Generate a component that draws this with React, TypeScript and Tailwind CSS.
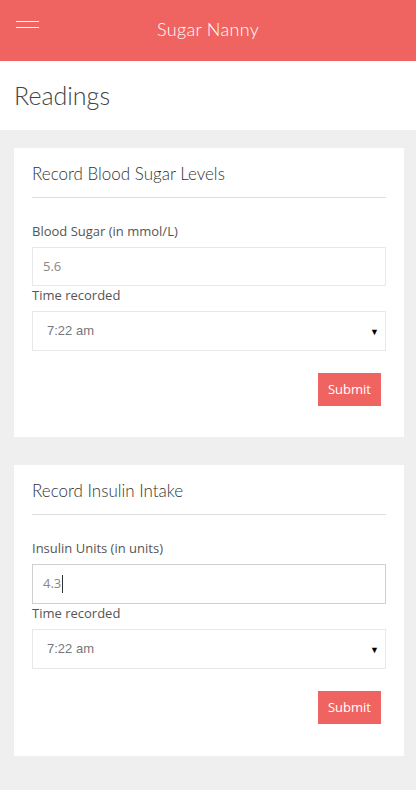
import React from "react";

function Field({ label, value, focused }: { label: string; value: string; focused?: boolean }) {
  return (
    <div>
      <p className="text-[13px] leading-[18px] text-[#555] mb-[7px]">{label}</p>
      <div
        className={`border flex items-center px-[10px] text-[13px] text-[#888] ${
          focused ? "h-[40px] border-[#cfcfcf]" : "h-[39px] border-[#e8e8e8]"
        }`}
      >
        <span>{value}</span>
        {focused && <span className="inline-block w-px h-[18px] bg-[#333] ml-px" />}
      </div>
    </div>
  );
}

function TimeSelect() {
  return (
    <div>
      <p className="text-[13px] leading-[18px] text-[#555] mb-[7px]">Time recorded</p>
      <div className="h-[40px] border border-[#e8e8e8] flex items-center justify-between pl-[14px] pr-[6px]">
        <span className="text-[13px] text-[#777] font-['Liberation_Sans',sans-serif]">7:22 am</span>
        <span className="text-[9px] text-black leading-none">▼</span>
      </div>
    </div>
  );
}

function Card({ title, label, value, focused }: { title: string; label: string; value: string; focused?: boolean }) {
  return (
    <section className={`bg-white px-[18px] pt-[14px] ${focused ? "pb-[32px]" : "pb-[31px]"}`}>
      <h2 className="text-[17px] leading-[24px] font-light font-['Lato',sans-serif] text-[#333] pb-[11px] border-b border-[#ddd]">
        {title}
      </h2>
      <div className="mt-[24px]">
        <Field label={label} value={value} focused={focused} />
        <TimeSelect />
      </div>
      <div className="flex justify-end mt-[22px] pr-[5px]">
        <button className="h-[33px] w-[63px] bg-[#ef6461] text-white text-[13px]">Submit</button>
      </div>
    </section>
  );
}

export default function App() {
  return (
    <div className="min-h-[790px] bg-[#efefef] font-['Open_Sans',sans-serif]">
      <header className="h-[61px] bg-[#ef6461] relative flex items-center justify-center">
        <button className="absolute left-[16px] top-[21px] flex flex-col gap-[5px]">
          <span className="block w-[23px] h-px bg-white" />
          <span className="block w-[23px] h-px bg-white" />
        </button>
        <h1 className="text-white text-[18px] font-light font-['Lato',sans-serif] tracking-[0.3px] mt-[-3px]">Sugar Nanny</h1>
      </header>

      <div className="bg-white h-[69px] flex items-center px-[14px]">
        <h1 className="text-[25px] font-light font-['Lato',sans-serif] text-[#444] mt-[1px]">Readings</h1>
      </div>

      <main className="pl-[14px] pr-[12px] pt-[18px] flex flex-col gap-[28px] pb-[34px]">
        <Card title="Record Blood Sugar Levels" label="Blood Sugar (in mmol/L)" value="5.6" />
        <Card title="Record Insulin Intake" label="Insulin Units (in units)" value="4.3" focused />
      </main>
    </div>
  );
}
